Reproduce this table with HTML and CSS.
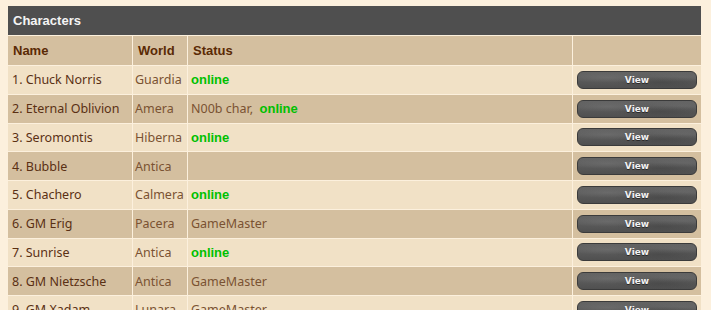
FILE: index.html
```html
<!DOCTYPE html>
<html>
<head>
<meta charset="utf-8">
<link rel="stylesheet" href="styles.css">
</head>
<body>
<div class="page">
<table class="chars">
  <colgroup>
    <col class="c-name"><col class="c-world"><col class="c-status"><col class="c-action">
  </colgroup>
  <tr><th class="title" colspan="4">Characters</th></tr>
  <tr class="head"><th>Name</th><th>World</th><th>Status</th><th></th></tr>
  <tr class="odd"><td class="name">1. Chuck Norris</td><td class="world">Guardia</td><td class="status"><span class="on">online</span></td><td class="act"><span class="btn">View</span></td></tr>
  <tr class="even"><td class="name">2. Eternal Oblivion</td><td class="world">Amera</td><td class="status">N00b char, &nbsp;<span class="on">online</span></td><td class="act"><span class="btn">View</span></td></tr>
  <tr class="odd"><td class="name">3. Seromontis</td><td class="world">Hiberna</td><td class="status"><span class="on">online</span></td><td class="act"><span class="btn">View</span></td></tr>
  <tr class="even"><td class="name">4. Bubble</td><td class="world">Antica</td><td class="status"></td><td class="act"><span class="btn">View</span></td></tr>
  <tr class="odd"><td class="name">5. Chachero</td><td class="world">Calmera</td><td class="status"><span class="on">online</span></td><td class="act"><span class="btn">View</span></td></tr>
  <tr class="even"><td class="name">6. GM Erig</td><td class="world">Pacera</td><td class="status">GameMaster</td><td class="act"><span class="btn">View</span></td></tr>
  <tr class="odd"><td class="name">7. Sunrise</td><td class="world">Antica</td><td class="status"><span class="on">online</span></td><td class="act"><span class="btn">View</span></td></tr>
  <tr class="even"><td class="name">8. GM Nietzsche</td><td class="world">Antica</td><td class="status">GameMaster</td><td class="act"><span class="btn">View</span></td></tr>
  <tr class="odd"><td class="name">9. GM Xadam</td><td class="world">Lunara</td><td class="status">GameMaster</td><td class="act"><span class="btn">View</span></td></tr>
</table>
</div>
</body>
</html>
```
FILE: styles.css
```css
html, body {
  margin: 0;
  padding: 0;
  background: #fcf0dd;
  overflow: hidden;
}
.page {
  padding: 5px 9px 0 7px;
}
.chars {
  border-collapse: separate;
  border-spacing: 1px;
  table-layout: fixed;
  width: 695px;
  font-family: "Noto Sans", "Open Sans", sans-serif;
  font-size: 12.5px;
}
.c-name { width: 124px; }
.c-world { width: 54px; }
.c-status { width: 384px; }
.c-action { width: 128px; }
.chars th, .chars td {
  padding: 0 4px;
  height: 27.75px;
  text-align: left;
  vertical-align: middle;
  white-space: nowrap;
  overflow: hidden;
}
.chars th {
  font-family: "Liberation Sans", Arial, sans-serif;
  font-size: 13px;
}
.chars th.title {
  background: #4f4f4f;
  color: #f4f4f4;
  font-weight: bold;
  height: 29px;
  padding-left: 5px;
}
.head th {
  background: #d4bf9f;
  color: #5a2a05;
  font-weight: bold;
  height: 29px;
  padding-left: 5px;
}
.odd td { background: #f1e1c6; }
.even td { background: #d4bf9f; }
.name {
  color: #5a3014;
  padding-left: 4px !important;
}
.world {
  color: #7a5232;
  padding-left: 2px !important;
  padding-right: 0 !important;
}
.status {
  color: #7a5232;
  padding-left: 3px !important;
}
.on {
  color: #00c000;
  font-weight: bold;
  font-family: "Liberation Sans", Arial, sans-serif;
  font-size: 13px;
}
.act {
  padding: 0 4px !important;
}
.btn {
  display: flex;
  align-items: center;
  justify-content: center;
  box-sizing: border-box;
  width: 120px;
  height: 18px;
  border: 1px solid #3b3b3b;
  border-radius: 6px;
  background:
    radial-gradient(ellipse at 25% 35%, rgba(130,130,130,0.35), transparent 35%),
    radial-gradient(ellipse at 70% 65%, rgba(40,40,40,0.25), transparent 40%),
    radial-gradient(ellipse at 90% 30%, rgba(120,120,120,0.3), transparent 30%),
    linear-gradient(#646464, #505050);
  color: #f2f2f2;
  font-family: "DejaVu Sans", Verdana, sans-serif;
  font-weight: bold;
  font-size: 9px;
  text-shadow: 0 1px 0 #2a2a2a;
}
```
